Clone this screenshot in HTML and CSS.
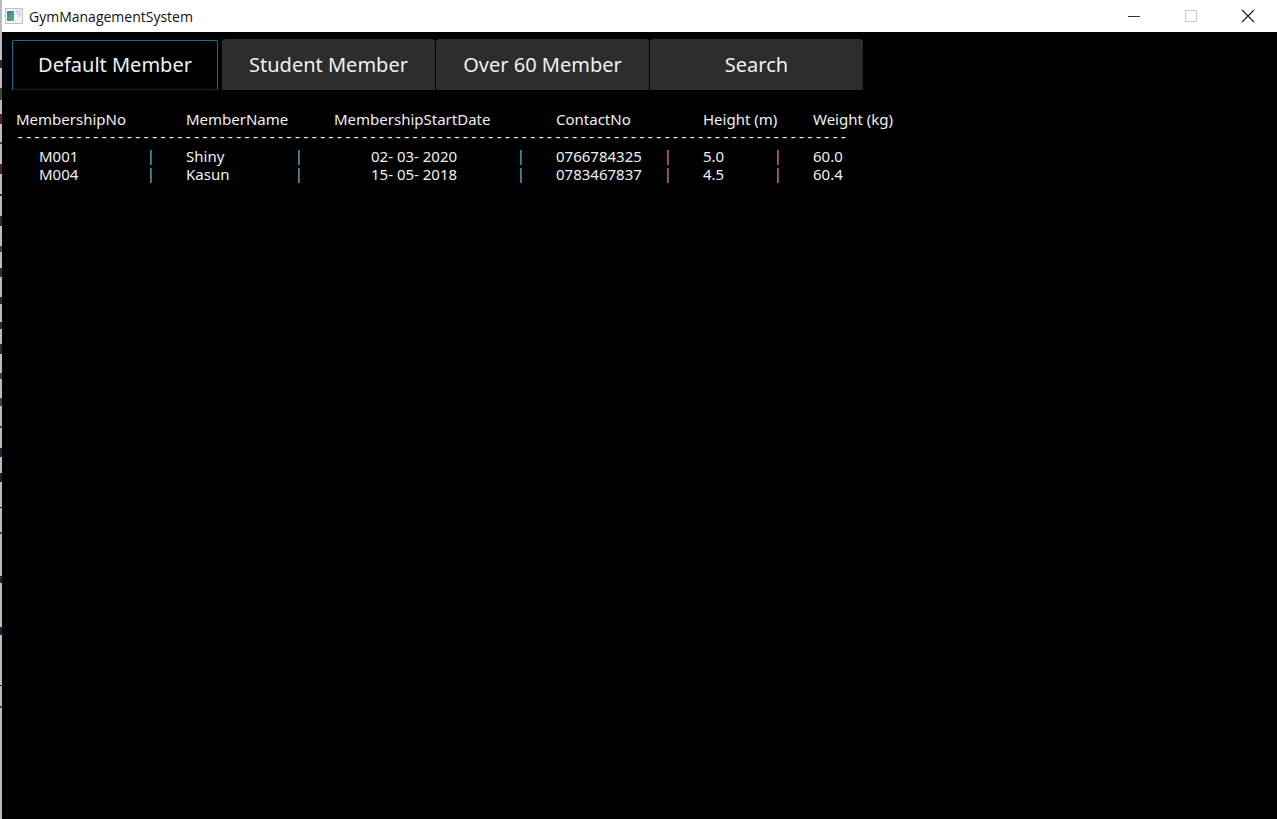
FILE: index.html
```html
<!DOCTYPE html>
<html lang="en">
<head>
<meta charset="utf-8">
<title>GymManagementSystem</title>
<link rel="stylesheet" href="styles.css">
</head>
<body>
<div class="window">
  <header class="titlebar">
    <svg class="app-icon" viewBox="0 0 18 16" aria-hidden="true">
      <defs><linearGradient id="pane" x1="0" y1="0" x2="1" y2="1"><stop offset="0" stop-color="#3f7f8c"/><stop offset="1" stop-color="#62ab84"/></linearGradient></defs>
      <rect x=".5" y=".5" width="17" height="15" fill="#f1f3f4" stroke="#c0c3c6"/>
      <rect x="2" y="3" width="7" height="10" fill="url(#pane)"/>
      <path d="M11 2H16V9H14L11 5Z" fill="#d2dce4"/>
    </svg>
    <h1 class="title">GymManagementSystem</h1>
    <div class="controls">
      <button class="control" type="button" aria-label="Minimize"><svg viewBox="0 0 14 14"><path d="M1 7.5H13" stroke="#333"/></svg></button>
      <button class="control" type="button" aria-label="Maximize" disabled><svg viewBox="0 0 14 14"><rect x="1.500" y="1.500" width="11" height="11" fill="none" stroke="#ccc"/></svg></button>
      <button class="control" type="button" aria-label="Close"><svg viewBox="0 0 14 14"><path d="M1 1L13 13M13 1L1 13" stroke="#222" stroke-width="1.200"/></svg></button>
    </div>
  </header>
  <main class="content">
    <nav class="tabs">
      <button class="tab tab-active" type="button">Default Member</button>
      <button class="tab" type="button">Student Member</button>
      <button class="tab" type="button">Over 60 Member</button>
      <button class="tab" type="button">Search</button>
    </nav>
    <table class="members">
      <colgroup>
        <col class="c-no"><col class="c-sep"><col class="c-name"><col class="c-sep"><col class="c-date"><col class="c-sep"><col class="c-contact"><col class="c-sep"><col class="c-height"><col class="c-sep"><col class="c-weight">
      </colgroup>
      <thead>
        <tr><th colspan="2">MembershipNo</th><th colspan="2">MemberName</th><th colspan="2">MembershipStartDate</th><th colspan="2">ContactNo</th><th colspan="2">Height (m)</th><th>Weight (kg)</th></tr>
        <tr class="rule"><td colspan="11">---------------------------------------------------------------------------------------------------</td></tr>
      </thead>
      <tbody>
        <tr><td class="no">M001</td><td class="sep">|</td><td>Shiny</td><td class="sep">|</td><td class="date">02- 03- 2020</td><td class="sep">|</td><td>0766784325</td><td class="sep">|</td><td>5.0</td><td class="sep">|</td><td>60.0</td></tr>
        <tr><td class="no">M004</td><td class="sep">|</td><td>Kasun</td><td class="sep">|</td><td class="date">15- 05- 2018</td><td class="sep">|</td><td>0783467837</td><td class="sep">|</td><td>4.5</td><td class="sep">|</td><td>60.4</td></tr>
      </tbody>
    </table>
  </main>
</div>
</body>
</html>
```
FILE: styles.css
```css
* { box-sizing: border-box; }
body { margin: 0; background: #000; font-family: "Noto Sans", sans-serif; }
.window {
  min-height: 100vh;
  display: flex;
  flex-direction: column;
  padding-left: 2px;
  background:
    linear-gradient(transparent 60px, #333 60px 68px, transparent 68px 88px, #444 88px 100px, transparent 100px 114px, #523 114px 124px, transparent 124px 142px, #444 142px 144px, transparent 144px 164px, #423 164px 174px, transparent 174px 194px, #423 194px 196px, transparent 196px 216px, #423 216px 226px, transparent 226px 246px, #444 246px 252px, transparent 252px 268px, #423 268px 277px, transparent 277px 297px, #423 297px 304px, transparent 304px 322px, #423 322px 329px, transparent 329px 344px, #423 344px 354px, transparent 354px 373px, #444 373px 379px, transparent 379px 398px, #444 398px 406px, transparent 406px 426px, #444 426px 428px, transparent 428px 448px, #224 448px 457px, transparent 457px 473px, #222 473px 482px, transparent 482px 507px, #222 507px 508px, transparent 508px 532px, #444 532px 534px, transparent 534px 576px, #224 576px 583px, transparent 583px 627px, #224 627px 635px, transparent 635px 685px, #222 685px 686px, transparent 686px 706px, #444 706px 708px, transparent 708px) left / 2px 100% no-repeat,
    linear-gradient(#bbb, #bbb) left / 2px 100% no-repeat #000;
}
.titlebar {
  height: 32px;
  display: flex;
  align-items: center;
  gap: 6px;
  padding: 0 1px 0 3px;
  background: #fff;
}
.app-icon { width: 18px; height: 16px; }
.title {
  flex: 1;
  margin: 0;
  padding-top: 2px;
  font: 400 14px/20px "Open Sans", sans-serif;
  color: #111;
}
.controls { display: flex; }
.control {
  width: 57px;
  height: 32px;
  padding: 0;
  border: 0;
  background: none;
  display: flex;
  align-items: center;
  justify-content: center;
}
.control svg { width: 14px; height: 14px; }
.content { flex: 1; padding: 7px 10px; }
.tabs { display: flex; gap: 1px; }
.tab {
  width: 213px;
  height: 51px;
  padding: 0;
  border: 0;
  border-radius: 3px 3px 0 0;
  background: #2d2d2d;
  color: #f0f0f0;
  font: 400 20px/28px "Noto Sans", sans-serif;
}
.tab-active {
  width: 206px;
  height: 50px;
  margin: 1px 3px 0 0;
  background: #000;
  border: 1px solid #12708c;
  border-bottom-color: #05242c;
  border-radius: 2px 2px 0 0;
}
.members {
  table-layout: fixed;
  width: 890px;
  margin: 20px 0 0 4px;
  border-collapse: collapse;
  color: #f0f0f0;
  font-size: 15px;
  line-height: 18px;
  white-space: nowrap;
}
.members th, .members td { padding: 0; text-align: left; font-weight: 400; }
.members .no { padding-left: 23px; }
.members .date { padding-left: 37px; }
.members .sep { color: #bbb; font-size: 14px; }
.members .rule td { padding-top: 2px; font: 400 14px/17px "Liberation Mono", monospace; }
.c-no { width: 131px; }
.c-name { width: 109px; }
.c-date { width: 183px; }
.c-contact { width: 108px; }
.c-height { width: 71px; }
.c-sep { width: 39px; }
```
